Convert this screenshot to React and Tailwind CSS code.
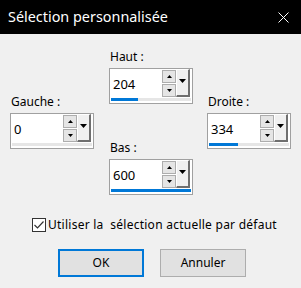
import React from "react";

const font = { fontFamily: '"Noto Sans", "Segoe UI", sans-serif' };

const Tri = ({ up, big }) => (
  <svg width={big ? 7 : 5} height={big ? 4 : 3} viewBox={big ? "0 0 7 4" : "0 0 5 3"}>
    {up ? (
      <polygon points="2.5,0 5,3 0,3" fill="#000" />
    ) : big ? (
      <polygon points="0,0 7,0 3.5,4" fill="#000" />
    ) : (
      <polygon points="0,0 5,0 2.5,3" fill="#000" />
    )}
  </svg>
);

const Spin = ({ value, fill }) => (
  <div className="flex h-[36px] w-[84px] flex-col border border-[#a0a0a0] bg-white">
    <div className="flex h-[29px]">
      <div className="flex w-[52px] items-center pl-[3px] pt-[2px] text-[13px] leading-none text-black">
        {value}
      </div>
      <div className="flex w-[14px] flex-col gap-[1px] pt-[1px]">
        <div className="flex h-[13px] items-center justify-center border border-[#adadad] bg-[#e5e5e5]">
          <Tri up />
        </div>
        <div className="flex h-[13px] items-center justify-center border border-[#adadad] bg-[#e5e5e5]">
          <Tri />
        </div>
      </div>
      <div className="flex h-[28px] w-[14px] items-center justify-center border-t border-l border-r-2 border-b-2 border-t-white border-l-white border-r-[#6f6f6f] border-b-[#6f6f6f] bg-[#f0f0f0] pb-[3px]">
        <Tri big />
      </div>
    </div>
    <div className="ml-[1px] mr-[1px] h-[3px] bg-[#e6e6e6]">
      <div className="h-full bg-[#0078d7]" style={{ width: fill }} />
    </div>
  </div>
);

const Field = ({ label, value, fill }) => (
  <div className="flex flex-col">
    <div className="mb-[3px] h-4 pl-[1px] text-[12px] leading-4 text-black">{label}</div>
    <Spin value={value} fill={fill} />
  </div>
);

export default function App() {
  return (
    <div className="h-[288px] w-[301px] overflow-hidden bg-[#f0f0f0]" style={font}>
      <div className="flex h-[34px] items-center justify-between bg-black pl-[8px] pr-[12px]">
        <span className="text-[14.4px] leading-none text-white">Sélection personnalisée</span>
        <svg width="11" height="11" viewBox="0 0 11 11">
          <path d="M0.5 0.5 L10.5 10.5 M10.5 0.5 L0.5 10.5" stroke="#fff" strokeWidth="1" />
        </svg>
      </div>

      <div className="flex flex-col">
        <div className="flex items-start gap-[15px] pl-[10px]">
          <div className="pt-[60px]">
            <Field label="Gauche :" value="0" fill={0} />
          </div>
          <div className="flex flex-col gap-[36px] pt-[15px]">
            <Field label="Haut :" value="204" fill={27} />
            <Field label="Bas :" value="600" fill="100%" />
          </div>
          <div className="-ml-[1px] pt-[60px]">
            <Field label="Droite :" value="334" fill={29} />
          </div>
        </div>

        <div className="mt-[22px] flex h-4 items-center pl-[32px]">
          <div className="flex h-[14px] w-[14px] items-center justify-center border border-[#333] bg-white">
            <svg width="10" height="8" viewBox="0 0 10 8">
              <path d="M0.5 4 L3.5 7 L9.5 0.5" stroke="#333" strokeWidth="1.2" fill="none" />
            </svg>
          </div>
          <span className="ml-[2px] whitespace-pre text-[12px] leading-4 tracking-[0.25px] text-black">
            Utiliser la  sélection actuelle par défaut
          </span>
        </div>

        <div className="mt-[16px] flex gap-[16px] pl-[58px]">
          <button className="flex h-[28px] w-[86px] items-center justify-center border-2 border-[#0078d7] bg-[#e1e1e1] text-[12px] text-black">
            OK
          </button>
          <button className="flex h-[28px] w-[86px] items-center justify-center border border-[#adadad] bg-[#e1e1e1] text-[12px] text-black">
            Annuler
          </button>
        </div>
      </div>
    </div>
  );
}
